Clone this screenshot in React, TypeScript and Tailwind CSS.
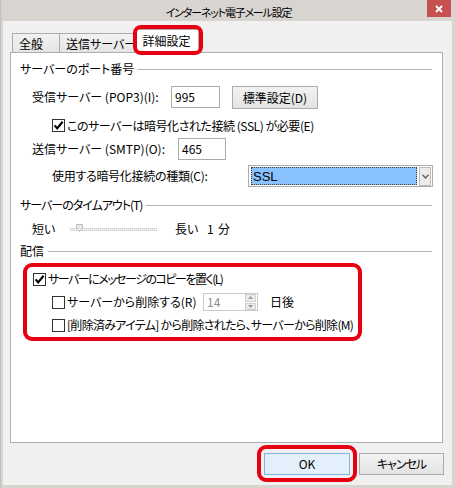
import React from "react";

const FONT = "font-['Noto_Sans_CJK_JP','Noto_Sans',sans-serif] [font-feature-settings:'palt']";

const Check = ({ checked }: { checked?: boolean }) => (
  <svg width="13" height="13" viewBox="0 0 13 13" className="shrink-0">
    <rect x="0.5" y="0.5" width="12" height="12" fill="#fff" stroke="#333" />
    {checked && (
      <path d="M2.6 6.4 L5.2 9.4 L10.6 2.8" fill="none" stroke="#000" strokeWidth="2.2" />
    )}
  </svg>
);

const GroupHeader = ({ label, cls, tcls }: { label: string; cls: string; tcls?: string }) => (
  <div className={`${cls} ml-[9px] mr-[10px] flex items-center`}>
    <span className={`leading-none whitespace-nowrap ${tcls ?? ""}`}>{label}</span>
    <div className="ml-[4px] flex-1 h-px bg-[#b4b4b4] mt-[1px]" />
  </div>
);

export default function App() {
  return (
    <div className={`${FONT} w-[455px] h-[488px] bg-[#d8d5d1] flex flex-col text-[12px] text-black overflow-hidden border-l border-[#c4c1bd]`}>
      {/* title bar */}
      <div className="h-[21px] relative flex items-center justify-center shrink-0">
        <span className="leading-none mt-[3px] ml-[1px] text-[11px] tracking-[-1.2px]">インターネット電子メール設定</span>
        <div className="absolute right-[4px] top-0 w-[24px] h-[17px] bg-[#c75050] flex items-center justify-center">
          <svg width="8" height="8" viewBox="0 0 8 8">
            <path d="M1 1 L7 7 M7 1 L1 7" stroke="#fff" strokeWidth="1.8" />
          </svg>
        </div>
      </div>

      {/* body */}
      <div className="ml-[2px] mr-[3px] mb-[3px] flex-1 bg-[#f0f0f0] flex flex-col">
        {/* tabs */}
        <div className="h-[31px] relative flex items-end pl-[9px] shrink-0">
          <div className="w-[48px] h-[19px] border border-b-0 border-[#acacac] bg-gradient-to-b from-[#f2f2f2] to-[#e5e5e5] flex items-center pl-[6px]">
            <span className="leading-none mt-[1px]">全般</span>
          </div>
          <div className="-ml-px w-[78px] h-[19px] border border-b-0 border-[#acacac] bg-gradient-to-b from-[#f2f2f2] to-[#e5e5e5] flex items-center pl-[6px]">
            <span className="leading-none mt-[1px] whitespace-nowrap">送信サーバー</span>
          </div>
          <div className="-ml-[3px] -mb-px relative z-10 w-[65px] h-[24px] border border-b-0 border-[#acacac] bg-white flex items-center justify-center">
            <span className="leading-none mb-[1px]">詳細設定</span>
          </div>
          <div className="absolute left-[130px] top-[4px] w-[70px] h-[30px] border-4 border-[#e60012] rounded-[8px] z-20" />
        </div>

        {/* panel */}
        <div className="ml-[7px] mr-[9px] h-[391px] border border-[#adadad] bg-white flex flex-col shrink-0">
          <GroupHeader label="サーバーのポート番号" cls="mt-[7px] h-[18px]" />

          <div className="mt-[8px] h-[23px] ml-[21px] flex items-start">
            <div className="w-[139px] h-[22px] flex items-center whitespace-nowrap">
              <span className="leading-none">受信サーバー (POP3)(I):</span>
            </div>
            <div className="w-[49px] h-[22px] border border-[#acacac] flex items-center pl-[3px]">
              <span className="leading-none">995</span>
            </div>
            <div className="ml-[12px] w-[86px] h-[23px] border border-[#acacac] bg-gradient-to-b from-[#f2f2f2] to-[#e3e3e3] flex items-center justify-center">
              <span className="leading-none">標準設定(D)</span>
            </div>
          </div>

          <div className="mt-[8px] h-[17px] ml-[41px] flex items-center">
            <Check checked />
            <span className="ml-[2px] leading-none whitespace-nowrap tracking-[-0.45px]">このサーバーは暗号化された接続 (SSL) が必要(E)</span>
          </div>

          <div className="mt-[4px] h-[22px] ml-[21px] flex items-center">
            <div className="w-[146px] whitespace-nowrap leading-none">送信サーバー (SMTP)(O):</div>
            <div className="w-[48px] h-[22px] border border-[#acacac] flex items-center pl-[3px]">
              <span className="leading-none">465</span>
            </div>
          </div>

          <div className="mt-[5px] h-[22px] ml-[41px] flex items-center">
            <div className="w-[196px] whitespace-nowrap leading-none tracking-[-0.3px]">使用する暗号化接続の種類(C):</div>
            <div className="w-[185px] h-[22px] border border-[#acacac] bg-white flex items-center pl-[2px] pr-[1px]">
              <div className="w-[167px] h-[18px] bg-[#8ac2ff] border border-dotted border-[#4a3a2a] flex items-center pl-[1px]">
                <span className="font-['Liberation_Sans',sans-serif] text-[13px] leading-none">SSL</span>
              </div>
              <div className="ml-[2px] w-[12px] h-[19px] border border-[#bcbcbc] bg-[#ececec] flex items-center justify-center">
                <svg width="7" height="5" viewBox="0 0 7 5">
                  <path d="M0.5 0.8 L3.5 4 L6.5 0.8" fill="none" stroke="#606060" strokeWidth="1.3" />
                </svg>
              </div>
            </div>
          </div>

          <GroupHeader label="サーバーのタイムアウト(T)" cls="mt-[9px] h-[17px]" tcls="tracking-[-1px]" />

          <div className="mt-[7px] h-[18px] ml-[21px] flex items-center">
            <span className="w-[38px] leading-none">短い</span>
            <div className="w-[87px] h-[10px] relative flex items-center">
              <div className="w-full h-[3px] border border-dotted border-[#c8c8c8] bg-[#ededed]" />
              <svg className="absolute left-[6px] top-[0px]" width="7" height="8" viewBox="0 0 7 8">
                <path d="M0.5 0.5 H6.5 V4.5 L3.5 7.5 L0.5 4.5 Z" fill="#e8e8e8" stroke="#bdbdbd" />
              </svg>
            </div>
            <span className="ml-[18px] w-[32px] leading-none">長い</span>
            <span className="w-[11px] leading-none">1</span>
            <span className="leading-none">分</span>
          </div>

          <GroupHeader label="配信" cls="mt-[4px] h-[18px]" />

          <div className="mt-[3px] ml-[12px] w-[339px] h-[78px] border-4 border-[#e60012] rounded-[9px] flex flex-col">
            <div className="mt-[3px] h-[18px] pl-[6px] flex items-center">
              <Check checked />
              <span className="ml-[2px] leading-none whitespace-nowrap tracking-[-1.5px]">サーバーにメッセージのコピーを置く(L)</span>
            </div>
            <div className="mt-[5px] h-[18px] pl-[25px] flex items-center">
              <Check />
              <div className="w-[138px] pl-[2px] leading-none whitespace-nowrap">サーバーから削除する(R)</div>
              <div className="w-[55px] h-[18px] border border-[#c9c9c9] bg-white flex items-center">
                <span className="pl-[3px] flex-1 leading-none text-[#8d8d8d]">14</span>
                <div className="w-[11px] h-[16px] mr-[1px] flex flex-col gap-[1px]">
                  <div className="flex-1 bg-[#ececec] border border-[#cfcfcf] flex items-center justify-center">
                    <svg width="5" height="3" viewBox="0 0 5 3"><path d="M0 3 L2.5 0 L5 3 Z" fill="#9a9a9a" /></svg>
                  </div>
                  <div className="flex-1 bg-[#ececec] border border-[#cfcfcf] flex items-center justify-center">
                    <svg width="5" height="3" viewBox="0 0 5 3"><path d="M0 0 L2.5 3 L5 0 Z" fill="#9a9a9a" /></svg>
                  </div>
                </div>
              </div>
              <span className="ml-[12px] leading-none">日後</span>
            </div>
            <div className="mt-[5px] h-[18px] pl-[25px] flex items-center">
              <Check />
              <span className="ml-[2px] leading-none whitespace-nowrap tracking-[-0.7px]">[削除済みアイテム] から削除されたら、サーバーから削除(M)</span>
            </div>
          </div>
        </div>

        {/* buttons */}
        <div className="mt-[10px] flex justify-end pr-[8px] gap-[9px]">
          <div className="relative w-[86px] h-[22px] border border-[#7eb4ea] bg-[#e3effb] flex items-center justify-center">
            <span className="leading-none">OK</span>
            <div className="absolute -left-[8px] -top-[9px] -right-[8px] -bottom-[8px] border-4 border-[#e60012] rounded-[9px]" />
          </div>
          <div className="w-[85px] h-[22px] border border-[#acacac] bg-gradient-to-b from-[#f2f2f2] to-[#e3e3e3] flex items-center justify-center">
            <span className="leading-none tracking-[-1px]">キャンセル</span>
          </div>
        </div>
      </div>
    </div>
  );
}
